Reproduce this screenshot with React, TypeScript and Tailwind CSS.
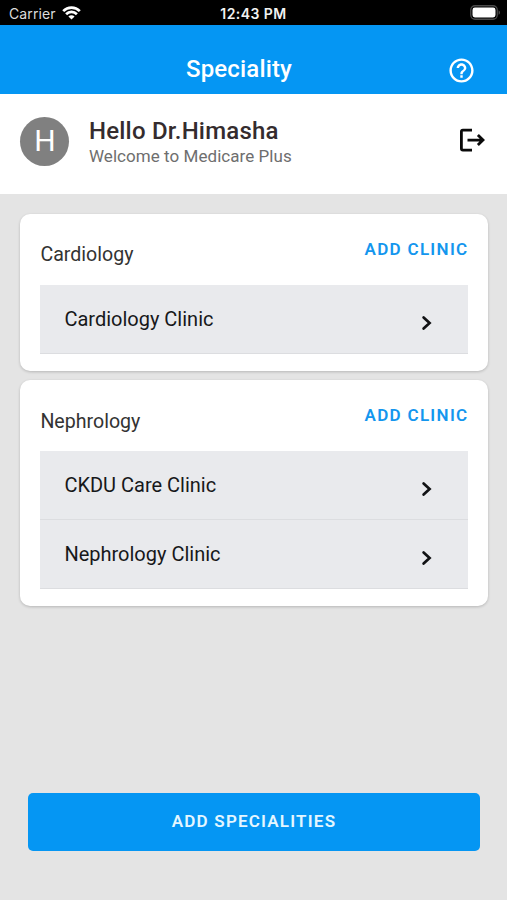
import React from "react";

function Chevron() {
  return (
    <svg className="mt-[8px] h-4 w-3" viewBox="0 0 12 16" fill="none" stroke="#111214" strokeWidth="2.7">
      <path d="M2.6 2.4L8.6 8L2.6 13.6" strokeLinecap="round" strokeLinejoin="miter" />
    </svg>
  );
}

function StatusBar() {
  return (
    <div className="grid h-[25px] grid-cols-3 items-center bg-black pt-[3px] text-white">
      <div className="flex items-center gap-[6px] pl-[9px] font-[Inter,sans-serif] text-[14px] leading-5 text-[#dcdcdc]">
        <span className="tracking-[0.1px]">Carrier</span>
        <svg className="-mt-[2px] h-[14px] w-[19px]" viewBox="0 0 19 14" fill="none" stroke="#fff" strokeWidth="2.7">
          <path d="M1.2 5.1C5.8 0.5 13.2 0.5 17.8 5.1" />
          <path d="M4.1 8.2C7.1 5.2 11.9 5.2 14.9 8.2" />
          <path d="M6.4 10.5C8.1 8.8 10.9 8.8 12.6 10.5L9.5 13.6Z" fill="#fff" stroke="none" />
        </svg>
      </div>
      <div className="text-center font-[Inter,sans-serif] text-[14px] leading-5 font-semibold tracking-[0.45px] text-[#f2f2f2]">
        12:43 PM
      </div>
      <svg className="-mt-[3px] mr-[6px] h-[15px] w-[31px] justify-self-end" viewBox="0 0 31 15">
        <rect x="0.75" y="0.75" width="26.5" height="13.5" rx="4.2" fill="none" stroke="#4a4a4a" strokeWidth="1.3" />
        <rect x="2.5" y="2.5" width="23" height="10" rx="2.4" fill="#fff" />
        <path d="M28.6 5.2C30.4 6 30.4 9 28.6 9.8Z" fill="#555" />
      </svg>
    </div>
  );
}

function SpecialityCard({ name, clinics }: { name: string; clinics: string[] }) {
  return (
    <section className="rounded-[10px] bg-white px-[20px] pt-[22px] pb-[17px] shadow-[0_1px_3px_rgba(0,0,0,0.2)]">
      <div className="flex h-[49px] items-start justify-between">
        <h2 className="pt-[5.5px] text-[19.6px] leading-7 text-[#333]">{name}</h2>
        <button className="-mr-[1px] text-[17px] leading-[27px] font-semibold tracking-[1.3px] text-[#1496ee]">ADD CLINIC</button>
      </div>
      <ul>
        {clinics.map((clinic) => (
          <li key={clinic} className="flex h-[69px] items-center justify-between border-b border-[#dcdde0] bg-[#e9eaed] pr-[35px] pl-[24px]">
            <span className="text-[20px] leading-7 text-[#17181a]">{clinic}</span>
            <Chevron />
          </li>
        ))}
      </ul>
    </section>
  );
}

export default function App() {
  return (
    <div className="flex h-[900px] w-[507px] flex-col overflow-hidden bg-[#e4e4e4] font-[Roboto,sans-serif]">
      <StatusBar />
      <header className="grid h-[69px] grid-cols-[1fr_auto_1fr] items-center bg-[#0596f3] pt-[18px] pr-[31px] pl-[2px] text-white">
        <h1 className="col-start-2 text-[24px] leading-8 font-medium tracking-[0.15px]">Speciality</h1>
        <svg className="mt-[3px] h-[29px] w-[29px] justify-self-end" viewBox="0 0 24 24" fill="currentColor">
          <path d="M11 18h2v-2h-2v2zm1-16C6.48 2 2 6.48 2 12s4.48 10 10 10 10-4.48 10-10S17.52 2 12 2zm0 18c-4.41 0-8-3.59-8-8s3.59-8 8-8 8 3.59 8 8-3.59 8-8 8zm0-14c-2.21 0-4 1.79-4 4h2c0-1.1.9-2 2-2s2 .9 2 2c0 2-3 1.75-3 5h2c0-2.25 3-2.5 3-5 0-2.21-1.79-4-4-4z" />
        </svg>
      </header>
      <div className="flex h-[100px] items-start bg-white pt-[23px] pr-[21px] pl-[20.4px]">
        <div className="flex h-[49px] w-[49px] items-center justify-center rounded-full bg-[#808080] pb-[2px] text-[30px] leading-none text-white">H</div>
        <div className="ml-[19.6px] flex-1">
          <p className="text-[24px] leading-7 font-medium tracking-[0.2px] text-[#342c2e]">Hello Dr.Himasha</p>
          <p className="text-[17px] leading-[22px] tracking-[0.05px] text-[#6e6e6e]">Welcome to Medicare Plus</p>
        </div>
        <svg className="mt-[10px] h-[26px] w-[27px]" viewBox="0 0 27 26" fill="none" stroke="#0a0a0a" strokeWidth="2.8">
          <path d="M13 3.1H3.9Q2.4 3.1 2.4 4.6V21.6Q2.4 23.1 3.9 23.1H13" />
          <path d="M8.5 13.1H24.5M18.9 8.1L24 13.1L18.9 18.1" />
        </svg>
      </div>
      <main className="flex flex-col gap-[9.5px] pt-[19.5px] pr-[19.5px] pl-[20.4px]">
        <SpecialityCard name="Cardiology" clinics={["Cardiology Clinic"]} />
        <SpecialityCard name="Nephrology" clinics={["CKDU Care Clinic", "Nephrology Clinic"]} />
      </main>
      <button className="mr-[27px] ml-[28px] mt-auto mb-[49px] h-[58px] rounded-[5px] bg-[#0596f3] pb-px text-[17px] font-semibold tracking-[1.2px] text-[#e4f6ff]">
        ADD SPECIALITIES
      </button>
    </div>
  );
}
